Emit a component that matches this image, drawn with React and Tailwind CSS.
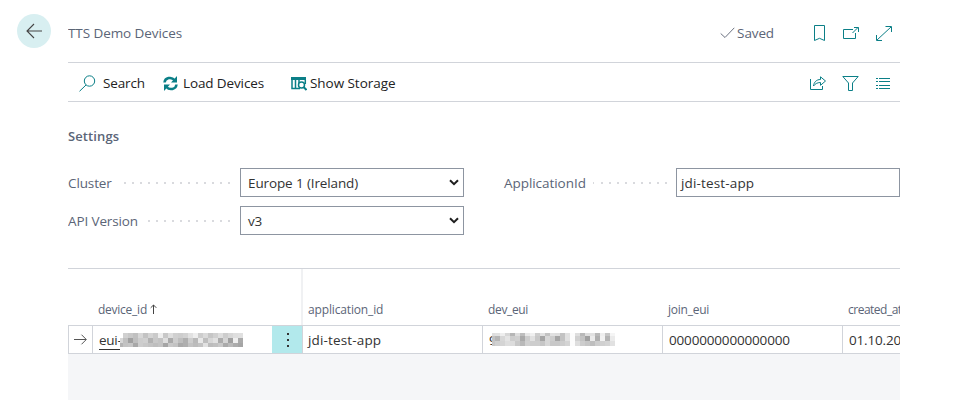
const ink = "text-[#5b6577]";

function Icon({ w, h, children, className = "" }) {
  return (
    <svg width={w} height={h} viewBox={`0 0 ${w} ${h}`} fill="none" stroke="#0b7f87" strokeWidth="1" className={`block shrink-0 ${className}`}>
      {children}
    </svg>
  );
}

// Pixelated block that hides part of an identifier.
function Mosaic({ rows, widths, heights }) {
  const xs = [];
  let x = 0;
  widths.forEach((w) => { xs.push(x); x += w; });
  const ys = [];
  let y = 0;
  heights.forEach((h) => { ys.push(y); y += h; });
  return (
    <svg width={x} height={y} className="block shrink-0" shapeRendering="crispEdges">
      {rows.map((r, j) => r.map((v, i) => (
        <rect key={`${j}-${i}`} x={xs[i]} y={ys[j]} width={widths[i]} height={heights[j]} fill={`rgb(${v},${v},${v})`} />
      )))}
    </svg>
  );
}

const deviceRows = [
  [255, 208, 200, 192, 215, 195, 212, 202, 238, 200, 222, 208, 205, 210, 225, 238, 205, 218, 198, 208, 222, 205, 215, 222, 224],
  [215, 192, 160, 190, 205, 208, 178, 200, 195, 222, 170, 205, 190, 175, 205, 185, 232, 190, 215, 225, 172, 212, 160, 238, 170],
  [180, 195, 198, 168, 205, 200, 195, 190, 195, 165, 200, 195, 170, 175, 195, 188, 195, 225, 188, 192, 200, 170, 185, 172, 165],
];
const euiRows = [
  [222, 225, 238, 215, 182, 222, 190, 232, 240, 205, 225, 195, 225, 222, 195, 225, 252, 222, 185, 222, 225, 185, 238, 198, 245],
  [195, 182, 215, 228, 205, 208, 170, 205, 225, 200, 165, 215, 205, 165, 195, 225, 252, 208, 195, 160, 235, 175, 242, 180, 235],
  [200, 208, 212, 222, 220, 200, 185, 208, 205, 205, 198, 215, 200, 200, 205, 212, 252, 222, 205, 198, 190, 205, 208, 212, 225],
];

const cells = [3, ...Array(24).fill(5)];

function Dots({ count, first }) {
  return (
    <svg width={count * 8} height="2" className="block shrink-0">
      {Array.from({ length: count }, (_, i) => (
        <rect key={i} x={i * 8} y="0" width={i === 0 && first ? first : 2} height="2" fill="#d9dade" />
      ))}
    </svg>
  );
}

function Select({ children }) {
  return (
    <div className="flex h-[29px] w-[224px] items-center justify-between border border-[#8d95a1] pl-[7px] pr-1 text-[#333]">
      {children}
      <svg width="10" height="7" viewBox="0 0 10 7" fill="none" stroke="#1f1f1f" strokeWidth="2">
        <path d="M1 1.2 5 5.2 9 1.2" />
      </svg>
    </div>
  );
}

export default function App() {
  return (
    <div className="flex h-[400px] w-[968px] overflow-hidden bg-white font-['Open_Sans','Noto_Sans',sans-serif] text-[13.5px] leading-5 tracking-[-0.12px] whitespace-nowrap">
      <aside className="w-[68px] shrink-0 pl-[17px] pt-[14px]">
        <div className="flex size-[34px] items-center justify-center rounded-full bg-[#d8eff1]">
          <svg width="16" height="16" fill="none" stroke="#444" strokeWidth="1.1" className="block">
            <path d="M16 8H1M8 1 1 8l7 7" />
          </svg>
        </div>
      </aside>
      <main className="flex w-[832px] shrink-0 flex-col overflow-hidden">
        <header className="flex h-[63px] shrink-0 items-center border-b border-[#d1d4da] pt-1">
          <span className={`${ink} tracking-[-0.08px]`}>TTS Demo Devices</span>
          <div className="ml-auto flex items-center pr-2">
            <Icon w={15} h={12} className="mr-[2px]"><path d="M.7 6.5 5 10.5 14.3.8" stroke="#6b7280" /></Icon>
            <span className={`${ink} mr-10`}>Saved</span>
            <Icon w={11} h={16} className="mr-[18px]"><path d="M.5.5h10v15L5.5 13.3.5 15.5z" /></Icon>
            <Icon w={16} h={12} className="mr-[17px]"><path d="M10 2.5H.5v9h12V6M9.5 6 15 .5M11 .5h4.5V5" /></Icon>
            <Icon w={16} h={15}><path d="M1 14 15 1M9.5.5h6V6M.5 9v5.5H6" /></Icon>
          </div>
        </header>
        <nav className="flex h-[39px] shrink-0 items-center border-b border-[#d1d4da] pl-[11px] pt-[2px] text-[#222]">
          <Icon w={17} h={17} className="mr-[7px]"><circle cx="10.5" cy="6" r="5.2" /><path d="M7 10 .5 16.3" /></Icon>
          <span className="mr-[18px] w-[42px]">Search</span>
          <Icon w={15} h={15} className="mr-[5px]">
            <path d="M1.5 6.5C2 1.5 8.5.5 11.5 4M13.5 8.5C13 13.5 6.5 14.5 3.5 11" strokeWidth="2.5" />
            <path d="M14 0v6.5H8zM1 15V8.5h6z" fill="#0b7f87" stroke="none" />
          </Icon>
          <span className="mr-[26px] w-[82px]">Load Devices</span>
          <Icon w={16} h={15} className="mr-[3px]">
            <path d="M0 1h15v3H0z" fill="#0b7f87" stroke="none" />
            <path d="M1 3v9.5h8M4.5 4v8M8 4v3M14.3 4v4" strokeWidth="1.5" />
            <circle cx="10.5" cy="9" r="3" strokeWidth="1.5" /><path d="m12.5 11 3 3" strokeWidth="2" />
          </Icon>
          <span className="tracking-[-0.05px]">Show Storage</span>
          <div className="ml-auto flex items-center pr-[10px]">
            <Icon w={17} h={14} className="mr-[15px]"><path d="M.5 3v10.5h12V10M3.5 10C4 6 6.5 3.5 10.5 3.5V.8L15.5 5l-5 4.3V6.5C7 6.5 5 8 3.5 10z" /></Icon>
            <Icon w={17} h={15} className="mr-[17px]"><path d="M.8.5h15.4L10.5 7v7.5h-4V7z" /></Icon>
            <Icon w={14} h={11}><path d="M0 .5h2M0 3.5h2M0 7.5h2M0 10.5h2M3 .5h11M3 3.5h11M3 7.5h11M3 10.5h11" /></Icon>
          </div>
        </nav>
        <h2 className={`${ink} mt-6 h-5 text-[13px] font-semibold tracking-[0.1px]`}>Settings</h2>
        <div className={`${ink} mt-[22px] flex`}>
          <div className="flex w-[436px] shrink-0 flex-col gap-[9px]">
            <div className="flex items-center"><span className="w-14">Cluster</span><Dots count={14} /><span className="w-1" /><Select>Europe 1 (Ireland)</Select></div>
            <div className="flex items-center"><span className="w-20">API Version</span><Dots count={11} /><span className="w-1" /><Select>v3</Select></div>
          </div>
          <div className="flex h-[29px] items-center">
            <span className="w-[89px] tracking-[-0.05px]">ApplicationId</span><Dots count={10} first={1} />
            <div className="ml-[3px] flex h-[29px] w-[224px] items-center border border-[#8d95a1] pl-1 tracking-[0.15px] text-[#333]">jdi-test-app</div>
          </div>
        </div>
        <section className="mt-[33px] flex grow flex-col border-t border-[#d1d4da] bg-[#f5f6f8]">
          <div className={`${ink} flex h-[56px] shrink-0 items-end bg-white text-[12px] tracking-[-0.25px]`}>
            <div className="flex h-full w-[235px] shrink-0 items-end border-r-2 border-[#f0f1f3] pb-[5px] pl-[30px]">
              <span className="mr-[3px]">device_id</span>
              <svg width="7" height="10" fill="none" stroke="#444" className="mb-[6px]"><path d="M3.5 10V1M.7 3.8 3.5 1l2.8 2.8" /></svg>
            </div>
            <span className="w-[180px] shrink-0 pb-[5px] pl-[5px] tracking-[-0.15px]">application_id</span>
            <span className="w-[180px] shrink-0 pb-[5px] pl-[5px] tracking-[-0.35px]">dev_eui</span>
            <span className="w-[180px] shrink-0 pb-[5px] pl-[5px]">join_eui</span>
            <span className="pb-[5px] pl-[5px] tracking-[-0.5px]">created_at</span>
          </div>
          <div className="flex h-[29px] shrink-0 border-y border-l border-[#d1d4da] bg-white text-[#333]">
            <div className="flex w-6 shrink-0 items-center justify-center border-r border-[#d1d4da]">
              <svg width="13" height="11" fill="none" stroke="#555"><path d="M0 5.5h12M7.5.7 12.3 5.5 7.5 10.3" /></svg>
            </div>
            <div className="flex w-[179px] shrink-0 items-center pl-[6px]">
              <span className="mt-px w-[21px] shrink-0 overflow-hidden border-b border-[#333] pt-px leading-[17px] tracking-[-0.25px]">eui-</span>
              <Mosaic rows={deviceRows} widths={cells} heights={[5, 5, 4]} />
            </div>
            <div className="flex w-[31px] shrink-0 items-center justify-center border-r border-[#d1d4da] bg-[#b2e9ec] pl-px">
              <svg width="2" height="14" fill="#333"><path d="M0 0h2v2H0zM0 6h2v2H0zM0 12h2v2H0z" /></svg>
            </div>
            <div className="flex w-[180px] shrink-0 items-center border-r border-[#d1d4da] pl-[5px] tracking-[0.15px]">jdi-test-app</div>
            <div className="flex w-[180px] shrink-0 items-center border-r border-[#d1d4da] pl-[6px]">
              <span className="w-[3px] shrink-0 overflow-hidden">9</span>
              <Mosaic rows={euiRows} widths={cells} heights={[3, 5, 5]} />
            </div>
            <div className="flex w-[180px] shrink-0 items-center border-r border-[#d1d4da] pl-[6px] tracking-[-0.17px]">0000000000000000</div>
            <div className="flex shrink-0 items-center pl-[6px] tracking-[-0.17px]">01.10.2021</div>
          </div>
        </section>
      </main>
    </div>
  );
}
